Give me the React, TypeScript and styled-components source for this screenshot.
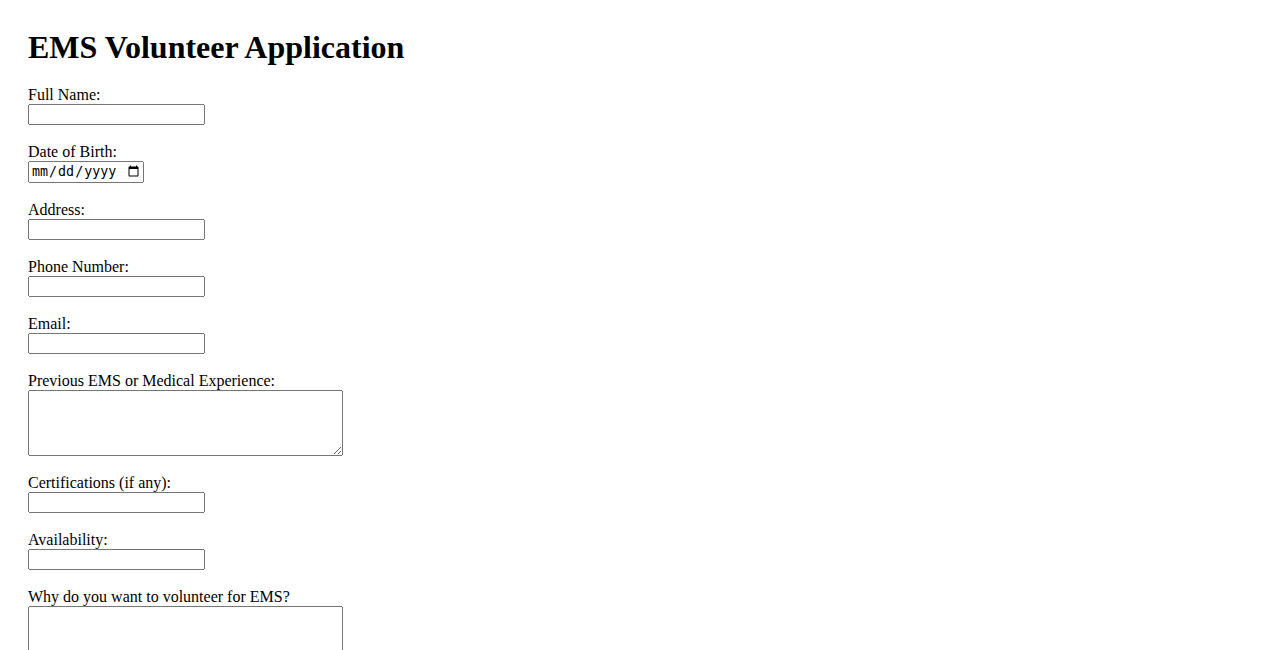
import styled, { createGlobalStyle } from "styled-components";

const GlobalStyle = createGlobalStyle`
  body {
    margin: 0;
    background: #ffffff;
    color: #000000;
    font-family: "Liberation Serif", "Times New Roman", serif;
  }
`;

const Page = styled.div`
  padding: 28px;
`;

const Title = styled.h1`
  margin: 1px 0 20px;
  font-size: 32px;
  font-weight: bold;
  line-height: normal;
`;

const Form = styled.form`
  display: flex;
  flex-direction: column;
`;

const Field = styled.div`
  display: flex;
  flex-direction: column;
  align-items: flex-start;
  margin-bottom: 18px;
`;

const Label = styled.label`
  display: block;
  font-size: 16px;
  line-height: 18px;
`;

const TextInput = styled.input<{ $w?: number; $h?: number }>`
  box-sizing: border-box;
  width: ${(p) => p.$w ?? 177}px;
  height: ${(p) => p.$h ?? 21}px;
  margin: 0;
`;

const TextArea = styled.textarea`
  box-sizing: border-box;
  width: 315px;
  height: 66px;
  margin: 0;
`;

type FieldDef = {
  id: string;
  label: string;
  kind: "text" | "date" | "email" | "tel" | "area";
};

const fields: FieldDef[] = [
  { id: "name", label: "Full Name:", kind: "text" },
  { id: "dob", label: "Date of Birth:", kind: "date" },
  { id: "address", label: "Address:", kind: "text" },
  { id: "phone", label: "Phone Number:", kind: "tel" },
  { id: "email", label: "Email:", kind: "email" },
  { id: "experience", label: "Previous EMS or Medical Experience:", kind: "area" },
  { id: "certs", label: "Certifications (if any):", kind: "text" },
  { id: "availability", label: "Availability:", kind: "text" },
  { id: "reason", label: "Why do you want to volunteer for EMS?", kind: "area" },
];

export default function App() {
  return (
    <>
      <GlobalStyle />
      <Page>
        <Title>EMS Volunteer Application</Title>
        <Form onSubmit={(e) => e.preventDefault()}>
          {fields.map((f) => (
            <Field key={f.id}>
              <Label htmlFor={f.id}>{f.label}</Label>
              {f.kind === "area" ? (
                <TextArea id={f.id} rows={4} cols={40} />
              ) : f.kind === "date" ? (
                <TextInput id={f.id} type="date" $w={116} $h={22} />
              ) : (
                <TextInput id={f.id} type={f.kind} />
              )}
            </Field>
          ))}
        </Form>
      </Page>
    </>
  );
}
